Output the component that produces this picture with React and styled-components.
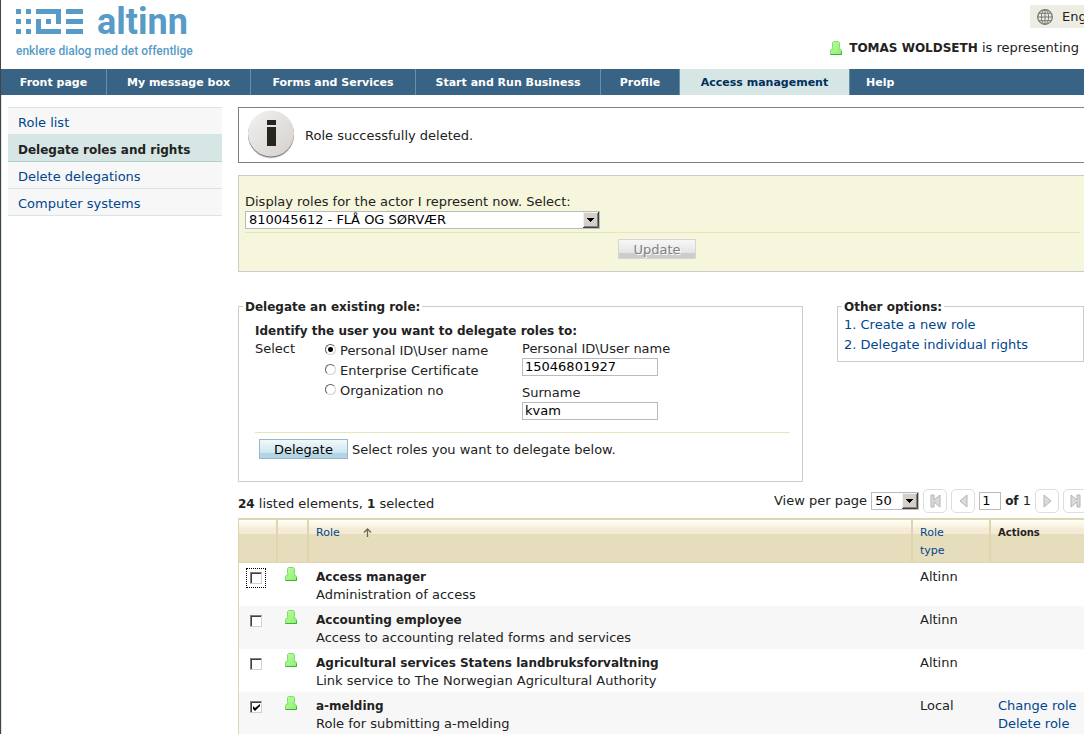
import React from "react"
import styled, { createGlobalStyle, ThemeProvider } from "styled-components"

const theme = {
  text: "#222222",
  link: "#00468e",
  navy: "#396384",
  mint: "#d5e6e4",
  stripe: "#f7f7f7",
  sand: "#e6ddbc",
  sandBorder: "#dfd5ae",
  logo: "#579bc6",
  line: "#cccccc",
  rule: "#e5e6b9",
}

const tabs = [
  "Front page",
  "My message box",
  "Forms and Services",
  "Start and Run Business",
  "Profile",
  "Access management",
  "Help",
]

const sideLinks = [
  "Role list",
  "Delegate roles and rights",
  "Delete delegations",
  "Computer systems",
]

const identities = [
  "Personal ID\\User name",
  "Enterprise Certificate",
  "Organization no",
]

const roles = [
  {
    name: "Access manager",
    description: "Administration of access",
    type: "Altinn",
    focused: true,
  },
  {
    name: "Accounting employee",
    description: "Access to accounting related forms and services",
    type: "Altinn",
  },
  {
    name: "Agricultural services Statens landbruksforvaltning",
    description: "Link service to The Norwegian Agricultural Authority",
    type: "Altinn",
  },
  {
    name: "a-melding",
    description: "Role for submitting a-melding",
    type: "Local",
    selected: true,
    actions: ["Change role", "Delete role"],
  },
]

const LogoMark = () => (
  <svg width="67" height="25" viewBox="0 0 67 25" fill={theme.logo}>
    <path d="M0 0h5v5H0zM10 0h5v5h-5zM0 10h5v5H0zM10 10h5v5h-5zM0 20h5v5H0zM10 20h5v5h-5z" />
    <path d="M20 0h25v15h-5V5H20zM20 10h5v10h20v5H20zM30 10h5v5h-5z" />
    <path d="M50 0h17v5H50zM50 10h17v5H50zM50 20h17v5H50z" />
  </svg>
)

const PersonIcon = () => (
  <svg width="12" height="14" viewBox="0 0 12 14">
    <defs>
      <linearGradient id="person" x1="0" y1="0" x2="1" y2="1">
        <stop offset="0" stopColor="#b8ff9c" />
        <stop offset="1" stopColor="#8cf070" />
      </linearGradient>
    </defs>
    <path
      d="M3.500 .5h5l1 1v5l-.5 1.500h1.500l1 2v3.500H.5V10l1-2H3l-.5-1.500v-5z"
      fill="url(#person)"
      stroke="#86d97a"
    />
    <path d="M11.500 10.500v3H.5" fill="none" stroke="#3fae3b" />
  </svg>
)

const GlobeIcon = () => (
  <svg width="16" height="16" viewBox="0 0 16 16" fill="none" stroke="#777">
    <circle cx="8" cy="8" r="7.300" strokeWidth="1.300" />
    <ellipse cx="8" cy="8" rx="3.600" ry="7.300" />
    <path d="M8 .5v15M.5 8h15M1.800 4.300h12.400M1.800 11.700h12.400" />
  </svg>
)

const InfoIcon = () => (
  <svg width="48" height="50" viewBox="0 0 48 50">
    <defs>
      <linearGradient id="disc" x1="0" y1="0" x2="1" y2="1">
        <stop offset="0" stopColor="#f3f2f1" />
        <stop offset="1" stopColor="#d3cfcc" />
      </linearGradient>
    </defs>
    <circle cx="24" cy="25.500" r="23" fill="#d6d6d6" />
    <circle cx="24" cy="24.500" r="23" fill="#777" />
    <circle cx="24" cy="23.500" r="23" fill="url(#disc)" />
    <path d="M20 10h9v5h-9zM20 17h9v19h-9z" fill="#26261f" />
  </svg>
)

const DropArrow = () => (
  <svg width="16" height="16" viewBox="0 0 16 16">
    <path d="M0 0h16v16H0z" fill="#d4d0c8" />
    <path d="M.5 15V.5H15" stroke="#f4f2ee" fill="none" />
    <path d="M1 14.500h13.500V1" stroke="#808080" fill="none" />
    <path d="M0 15.500h15.500V0" stroke="#404040" fill="none" />
    <path d="M4 6h7v1h-1v1H9v1H8v1H7V9H6V8H5V7H4z" fill="#000" />
  </svg>
)

const SortArrow = () => (
  <svg width="9" height="10" viewBox="0 0 9 10" fill="none" stroke="#6b6a50">
    <path d="M4.500 1v8M1 4.500l3.500-3.500 3.500 3.500" strokeWidth="1.300" />
  </svg>
)

const pagerShapes = {
  first: "M1 1h3v5l6-5v12L4 8v5H1z",
  previous: "M9 1v12L2 7z",
  next: "M2 1v12l7-6z",
  last: "M1 1l6 5V1h3v12H7V8l-6 5z",
}

const PagerIcon = ({ kind }) => (
  <svg width="11" height="14" viewBox="0 0 11 14">
    <path d={pagerShapes[kind]} fill="#dadada" stroke="#b4b4b4" />
  </svg>
)

const Select = ({ children, ...rest }) => (
  <SelectFrame>
    <StyledSelect {...rest}>{children}</StyledSelect>
    <DropArrow />
  </SelectFrame>
)

const Header = () => (
  <StyledHeader>
    <Brand href="#">
      <BrandRow>
        <LogoMark />
        <BrandName>altinn</BrandName>
      </BrandRow>
      <Tagline>enklere dialog med det offentlige</Tagline>
    </Brand>
    <UserArea>
      <LanguageButton type="button">
        <GlobeIcon />
        English
      </LanguageButton>
      <Representing>
        <PersonIcon />
        <span>
          <b>TOMAS WOLDSETH</b> is representing
        </span>
      </Representing>
    </UserArea>
  </StyledHeader>
)

const RoleRow = ({ role }) => (
  <tr>
    <Cell>
      <Checkbox
        type="checkbox"
        aria-label={role.name}
        defaultChecked={role.selected}
        $focused={role.focused}
      />
    </Cell>
    <IconCell>
      <PersonIcon />
    </IconCell>
    <Cell>
      <b>{role.name}</b>
      <div>{role.description}</div>
    </Cell>
    <Cell>{role.type}</Cell>
    <Cell>
      {role.actions &&
        role.actions.map(action => (
          <div key={action}>
            <Link href="#">{action}</Link>
          </div>
        ))}
    </Cell>
  </tr>
)

const App = () => {
  return (
    <ThemeProvider theme={theme}>
      <GlobalStyle />
      <Page>
        <Header />
        <Nav>
          {tabs.map(tab => (
            <Tab key={tab} href="#" $active={tab === "Access management"}>
              {tab}
            </Tab>
          ))}
        </Nav>
        <Body>
          <Sidebar>
            {sideLinks.map((label, i) => (
              <SideLink key={label} href="#" $active={i === 1}>
                {label}
              </SideLink>
            ))}
          </Sidebar>
          <Main>
            <Message>
              <InfoIcon />
              <p>Role successfully deleted.</p>
            </Message>
            <ActorPanel>
              <label htmlFor="actor">
                Display roles for the actor I represent now. Select:
              </label>
              <ActorSelect>
                <Select id="actor">
                  <option>810045612 - FLÅ OG SØRVÆR</option>
                </Select>
              </ActorSelect>
              <Rule />
              <UpdateRow>
                <Button type="button" disabled>
                  Update
                </Button>
              </UpdateRow>
            </ActorPanel>
            <Panels>
              <Fieldset>
                <legend>Delegate an existing role:</legend>
                <DelegateForm>
                  <b>Identify the user you want to delegate roles to:</b>
                  <FormGrid>
                    <span>Select</span>
                    <RadioList>
                      {identities.map((label, i) => (
                        <RadioLabel key={label}>
                          <Radio
                            type="radio"
                            name="identity"
                            defaultChecked={i === 0}
                          />
                          {label}
                        </RadioLabel>
                      ))}
                    </RadioList>
                    <Fields>
                      <Field>
                        Personal ID\User name
                        <Input type="text" defaultValue="15046801927" />
                      </Field>
                      <Field>
                        Surname
                        <Input type="text" defaultValue="kvam" />
                      </Field>
                    </Fields>
                  </FormGrid>
                  <Rule />
                  <SubmitRow>
                    <Button type="button">Delegate</Button>
                    <span>Select roles you want to delegate below.</span>
                  </SubmitRow>
                </DelegateForm>
              </Fieldset>
              <Fieldset>
                <legend>Other options:</legend>
                <Options>
                  <Link href="#">1. Create a new role</Link>
                  <Link href="#">2. Delegate individual rights</Link>
                </Options>
              </Fieldset>
            </Panels>
            <ListBar>
              <Count>
                <b>24</b> listed elements, <b>1</b> selected
              </Count>
              <Pager>
                <label htmlFor="perPage">View per page</label>
                <PageSize>
                  <Select id="perPage">
                    <option>50</option>
                  </Select>
                </PageSize>
                <PagerButton type="button" aria-label="First page">
                  <PagerIcon kind="first" />
                </PagerButton>
                <PagerButton type="button" aria-label="Previous page">
                  <PagerIcon kind="previous" />
                </PagerButton>
                <PageInput type="text" aria-label="Page" defaultValue="1" />
                <span>
                  <b>of</b> 1
                </span>
                <PagerButton type="button" aria-label="Next page">
                  <PagerIcon kind="next" />
                </PagerButton>
                <PagerButton type="button" aria-label="Last page">
                  <PagerIcon kind="last" />
                </PagerButton>
              </Pager>
            </ListBar>
            <Table>
              <colgroup>
                <Col $width="39px" />
                <Col $width="31px" />
                <Col />
                <Col $width="78px" />
                <Col $width="97px" />
              </colgroup>
              <thead>
                <tr>
                  <HeadCell />
                  <HeadCell />
                  <HeadCell>
                    <SortLink href="#">
                      Role
                      <SortArrow />
                    </SortLink>
                  </HeadCell>
                  <HeadCell>
                    <Link href="#">
                      Role
                      <br />
                      type
                    </Link>
                  </HeadCell>
                  <HeadCell>
                    <b>Actions</b>
                  </HeadCell>
                </tr>
              </thead>
              <tbody>
                {roles.map(role => (
                  <RoleRow key={role.name} role={role} />
                ))}
              </tbody>
            </Table>
          </Main>
        </Body>
      </Page>
    </ThemeProvider>
  )
}

const GlobalStyle = createGlobalStyle`
  * {
    box-sizing: border-box;
  }
  html {
    overflow: hidden auto;
    scrollbar-width: none;
  }
  body {
    margin: 0;
    background: #fff;
    color: ${theme.text};
    font: 13px/18px Verdana, "DejaVu Sans", sans-serif;
  }
  b {
    font-size: 12px;
  }
  input, select, button {
    font: inherit;
    margin: 0;
  }
  svg {
    display: block;
    flex: none;
  }
`

const Page = styled.div`
  min-height: 100vh;
  border-left: 1px solid #444;
  overflow: hidden;
`

const StyledHeader = styled.header`
  height: 69px;
  display: flex;
  justify-content: space-between;
`

const Brand = styled.a`
  padding: 9px 0 0 15px;
  color: ${props => props.theme.logo};
  text-decoration: none;
  white-space: nowrap;
`

const BrandRow = styled.div`
  display: flex;
  gap: 14px;
  height: 32px;
`

const BrandName = styled.span`
  font: bold 36px/27px Roboto, sans-serif;
`

const Tagline = styled.div`
  padding-top: 1px;
  font: 500 12px/18px Roboto, sans-serif;
`

const UserArea = styled.div`
  display: flex;
  flex-direction: column;
  align-items: flex-end;
  gap: 11px;
  padding: 5px 5px 0 0;
  white-space: nowrap;
`

const LanguageButton = styled.button`
  display: flex;
  align-items: center;
  gap: 9px;
  width: 94px;
  height: 23px;
  margin-right: -45px;
  padding: 0 7px;
  border: 0;
  background: #eeede4;
  color: ${props => props.theme.text};
`

const Representing = styled.div`
  display: flex;
  align-items: center;
  gap: 7px;
`

const Nav = styled.nav`
  display: grid;
  grid-template-columns: 106px 144px 165px 185px 79px 170px 1fr;
  height: 26px;
  background: ${props => props.theme.navy};
`

const Tab = styled.a`
  padding: 2px 16px 0;
  border-right: 1px solid #6592a0;
  background: ${props => (props.$active ? props.theme.mint : "transparent")};
  color: ${props => (props.$active ? "#00305c" : "white")};
  font-size: 11px;
  line-height: 24px;
  font-weight: bold;
  text-decoration: none;
  text-align: center;
  white-space: nowrap;

  &:last-child {
    border: 0;
    text-align: left;
  }
`

const Body = styled.div`
  display: grid;
  grid-template-columns: 214px minmax(0, 1fr);
  gap: 16px;
  margin-right: -4px;
  padding: 12px 0 0 6px;
  border-left: 1px solid ${props => props.theme.mint};
`

const Sidebar = styled.nav`
  display: flex;
  flex-direction: column;
  align-self: start;
  border-top: 1px solid ${props => props.theme.mint};
`

const SideLink = styled.a`
  height: 27px;
  padding: 2px 10px 0;
  border-bottom: 1px solid
    ${props => (props.$active ? "#b2cfcc" : props.theme.mint)};
  background: ${props =>
    props.$active ? props.theme.mint : props.theme.stripe};
  color: ${props => (props.$active ? props.theme.text : props.theme.link)};
  font-size: ${props => (props.$active ? "12px" : "13px")};
  font-weight: ${props => (props.$active ? "bold" : "normal")};
  line-height: 26px;
  text-decoration: none;
  white-space: nowrap;
`

const Main = styled.main`
  display: flex;
  flex-direction: column;
`

const Message = styled.div`
  display: flex;
  align-items: center;
  gap: 10px;
  height: 56px;
  padding: 0 8px;
  border: 1px solid #808080;

  p {
    margin: 0;
    padding-top: 2px;
  }
`

const ActorPanel = styled.section`
  display: flex;
  flex-direction: column;
  height: 97px;
  margin-top: 12px;
  padding: 17px 7px 0 6px;
  border: 1px solid ${props => props.theme.line};
  background: #f6f6dc;
`

const ActorSelect = styled.div`
  display: grid;
  width: 355px;
  margin-bottom: 3px;
`

const SelectFrame = styled.div`
  display: grid;
  position: relative;

  svg {
    position: absolute;
    top: 1px;
    right: 1px;
    pointer-events: none;
  }
`

const StyledSelect = styled.select`
  height: 18px;
  padding: 0 20px 0 3px;
  appearance: none;
  border: 1px solid #bbb;
  border-radius: 0;
  background: #fff;
  color: #000;
  line-height: 16px;
`

const Rule = styled.hr`
  width: 100%;
  height: 1px;
  margin: 0;
  border: 0;
  background: ${props => props.theme.rule};
`

const UpdateRow = styled.div`
  display: flex;
  justify-content: center;
  padding: 6px 11px 0 0;
`

const Button = styled.button`
  height: 20px;
  padding: 1px 14px 0;
  border: 1px solid #9ab7c9;
  background: linear-gradient(#f1f8fb, #cfe6f1 70%, #b2d4e5 75%);
  color: #000;
  line-height: 17px;

  &:disabled {
    border-color: #d6d6d6;
    background: linear-gradient(#f5f5f5 10%, #e4e4e4 70%, #cccccc 75%);
    color: #808080;
    text-shadow: 1px 1px #fff;
  }
`

const Panels = styled.div`
  display: grid;
  grid-template-columns: minmax(0, 565fr) minmax(0, 247fr);
  align-items: start;
  gap: 34px;
  padding: 24px 4px 0 0;
`

const Fieldset = styled.fieldset`
  min-width: 0;
  margin: 0;
  padding: 0;
  border: 1px solid ${props => props.theme.line};

  legend {
    margin-left: 4px;
    padding: 2px 2px 0;
    font-size: 12px;
    font-weight: bold;
  }
`

const DelegateForm = styled.div`
  padding: 6px 12px 22px 16px;
`

const FormGrid = styled.div`
  display: grid;
  grid-template-columns: 70px 197px 1fr;
  padding-bottom: 12px;
`

const RadioList = styled.div`
  display: flex;
  flex-direction: column;
  padding-top: 1px;
`

const RadioLabel = styled.label`
  display: flex;
  align-items: center;
  gap: 4px;
  height: 20px;
  white-space: nowrap;
`

const Radio = styled.input`
  flex: none;
  width: 11px;
  height: 11px;
  appearance: none;
  border: 1px solid;
  border-color: #606060 #d4d0c8 #d4d0c8 #606060;
  border-radius: 50%;
  background: #fff;

  && {
    margin-bottom: 4px;
  }

  &:checked {
    background: radial-gradient(circle, #000 2px, #fff 3px);
  }
`

const Fields = styled.div`
  display: flex;
  flex-direction: column;
  gap: 8px;
`

const Field = styled.label`
  display: flex;
  flex-direction: column;
`

const Input = styled.input`
  width: 136px;
  height: 18px;
  padding: 0 2px;
  border: 1px solid #bbb;
  background: #fff;
  color: #000;
`

const SubmitRow = styled.div`
  display: flex;
  align-items: center;
  gap: 4px;
  padding: 6px 0 0 4px;
  white-space: nowrap;

  span {
    padding-top: 2px;
  }
`

const Options = styled.div`
  display: flex;
  flex-direction: column;
  gap: 2px;
  padding: 0 6px 7px;
`

const Link = styled.a`
  color: ${props => props.theme.link};
  text-decoration: none;
`

const ListBar = styled.div`
  display: flex;
  align-items: center;
  justify-content: space-between;
  height: 36px;
  padding: 2px 1px 0 0;
  white-space: nowrap;
`

const Count = styled.span`
  padding-top: 5px;
`

const Pager = styled.div`
  display: flex;
  align-items: center;
  gap: 4px;
`

const PageSize = styled.div`
  display: grid;
  width: 48px;
`

const PagerButton = styled.button`
  display: grid;
  place-items: center;
  width: 24px;
  height: 24px;
  padding: 0;
  border: 1px solid #ddd;
  border-radius: 5px;
  background: #fff;
`

const PageInput = styled(Input)`
  width: 22px;
`

const Table = styled.table`
  width: 100%;
  table-layout: fixed;
  border-collapse: separate;
  border-spacing: 0;
  border-left: 1px solid ${props => props.theme.sandBorder};

  tbody tr {
    height: 43px;
  }
  tbody tr:nth-child(even) {
    background: ${props => props.theme.stripe};
  }
`

const Col = styled.col`
  width: ${props => props.$width || "auto"};
`

const HeadCell = styled.th`
  height: 45px;
  padding: 4px 8px 2px 7px;
  border-top: 2px solid ${props => props.theme.sandBorder};
  border-right: 2px solid ${props => props.theme.sandBorder};
  border-bottom: 1px solid ${props => props.theme.sandBorder};
  background: linear-gradient(
    #fffef8,
    #f8f3e2 7px,
    #f4ecd6 8px,
    #f4ead6 14px,
    ${props => props.theme.sand} 14px
  );
  font-size: 11px;
  font-weight: normal;
  text-align: left;
  vertical-align: top;

  b {
    font-size: 10px;
  }
`

const SortLink = styled(Link)`
  display: flex;
  align-items: center;
  gap: 23px;
`

const Cell = styled.td`
  padding: 5px 0 2px 7px;
  vertical-align: top;
  white-space: nowrap;
`

const IconCell = styled(Cell)`
  padding: 4px 0 0 7px;
`

const Checkbox = styled.input`
  display: block;
  width: 12px;
  height: 12px;
  && {
    margin: 4px;
  }
  appearance: none;
  border: 1px solid;
  border-color: #808080 #d4d0c8 #d4d0c8 #808080;
  background: #fff;
  box-shadow: inset 1px 1px #404040;
  outline: ${props => (props.$focused ? "1px dotted #000" : "none")};
  outline-offset: 3px;

  &:checked {
    background: #fff
      url("data:image/svg+xml,%3Csvg xmlns='http://www.w3.org/2000/svg' viewBox='0 0 7 7'%3E%3Cpath d='M0 2v3l2 2 5-5V0L2 4z'/%3E%3C/svg%3E")
      center / 7px no-repeat;
  }
`

export default App
